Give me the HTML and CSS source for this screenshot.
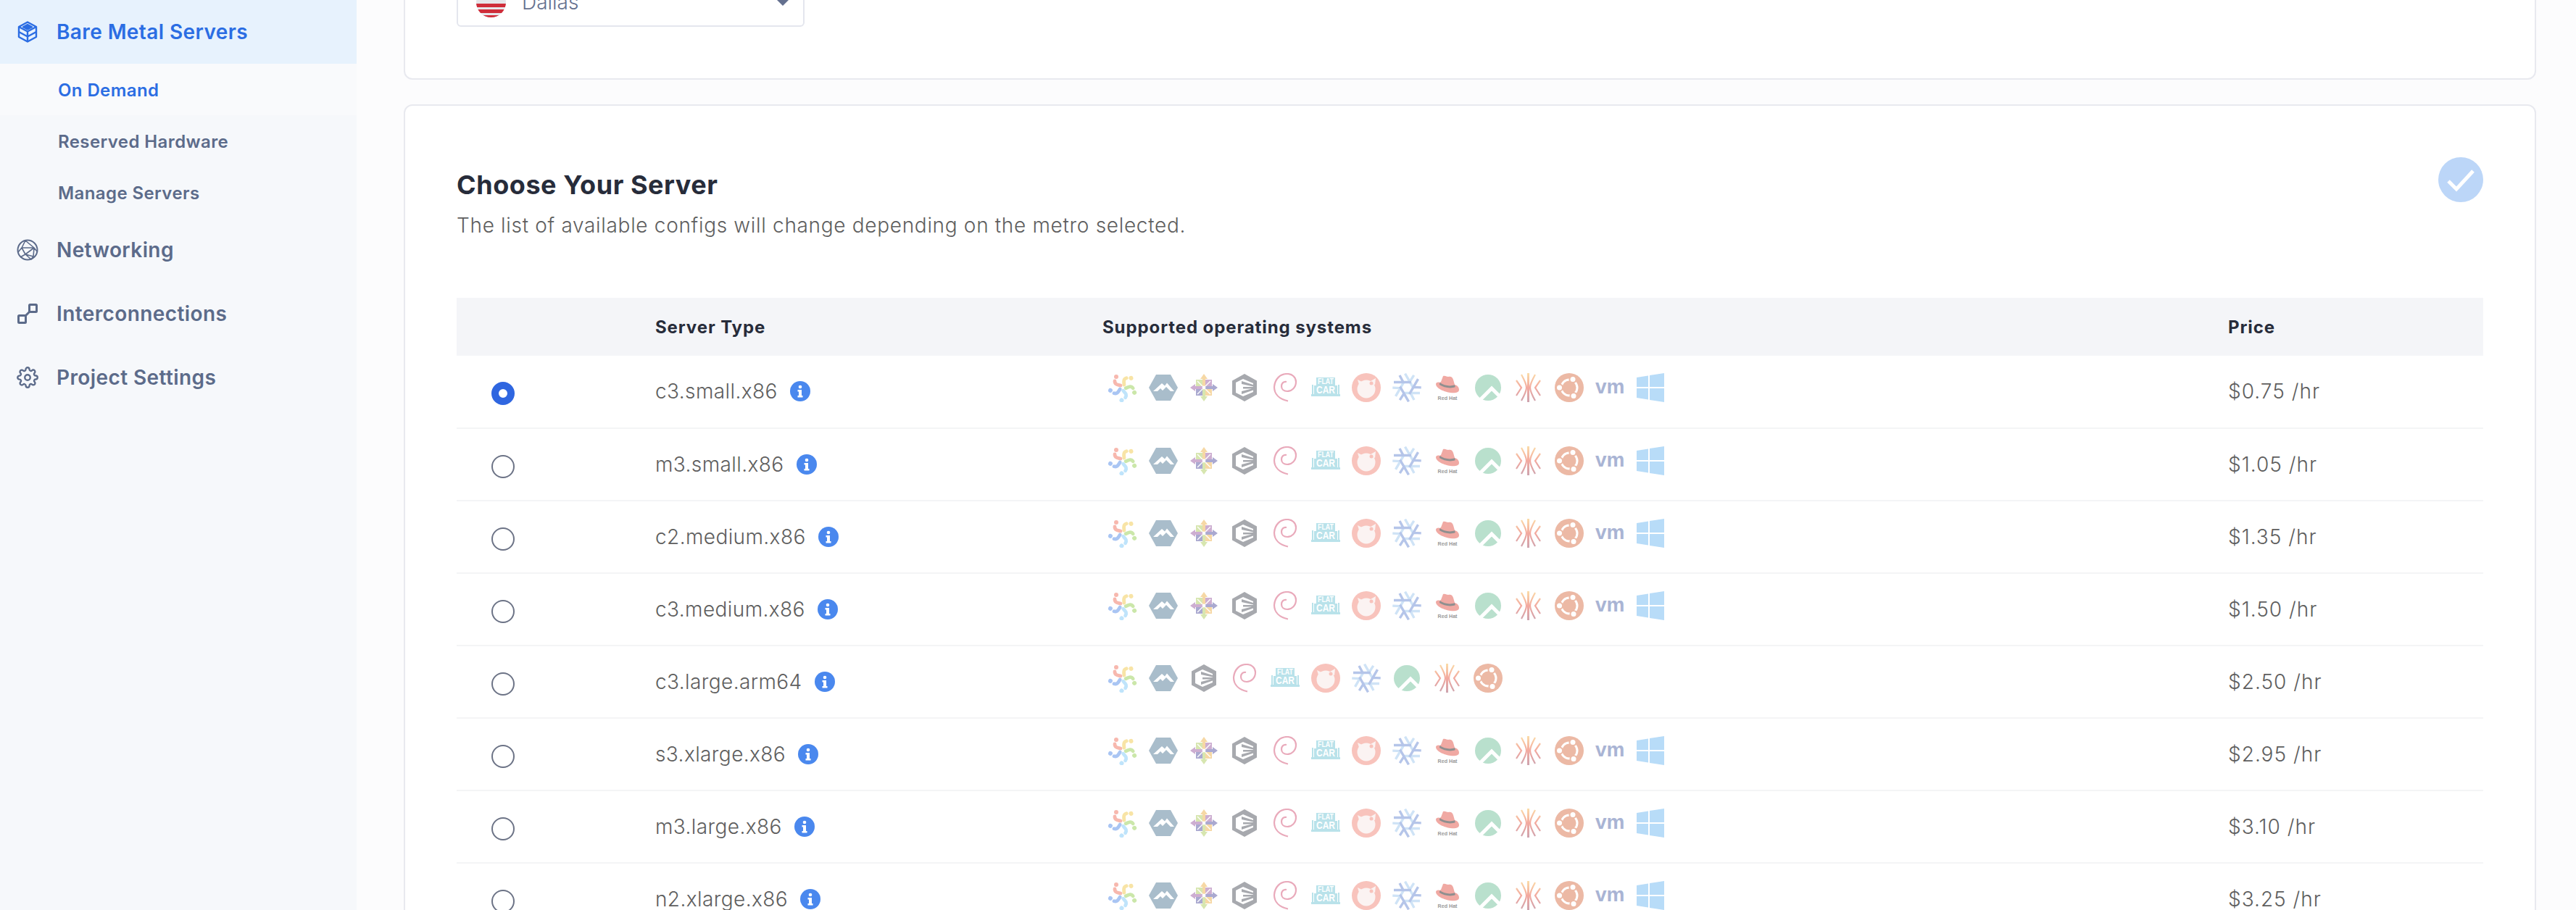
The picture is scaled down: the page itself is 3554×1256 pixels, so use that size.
FILE: index.html
```html
<!DOCTYPE html>
<html lang="en">

<head>
    <meta charset="UTF-8">
    <title>Choose Your Server</title>
    <link rel="stylesheet" href="styles.css">
</head>

<body>
    <!-- shared icons -->
    <svg class="defs" aria-hidden="true">
        <defs>
            <linearGradient id="streak" gradientUnits="userSpaceOnUse" x1="0" y1="0" x2="0" y2="40">
                <stop offset="0" stop-color="#fbdca8" />
                <stop offset=".5" stop-color="#f3a99f" />
                <stop offset="1" stop-color="#cda3ae" />
            </linearGradient>
            <g id="alma-petal" fill="none" stroke-width="4.800" stroke-linecap="round">
                <path d="M9 11c0 5 4 5 8 6" />
            </g>
        </defs>
        <symbol id="os-alma" viewBox="0 0 40 40">
            <g stroke="#f7b8ae" fill="#f7b8ae"><use href="#alma-petal" /><circle cx="11" cy="5" r="3" stroke="none" /></g>
            <g stroke="#f8e4a6" fill="#f8e4a6" transform="rotate(72 20 20)"><use href="#alma-petal" /><circle cx="11" cy="5" r="3" stroke="none" /></g>
            <g stroke="#cbe7aa" fill="#cbe7aa" transform="rotate(144 20 20)"><use href="#alma-petal" /><circle cx="11" cy="5" r="3" stroke="none" /></g>
            <g stroke="#bfe4fb" fill="#bfe4fb" transform="rotate(216 20 20)"><use href="#alma-petal" /><circle cx="11" cy="5" r="3" stroke="none" /></g>
            <g stroke="#a9c5f3" fill="#a9c5f3" transform="rotate(288 20 20)"><use href="#alma-petal" /><circle cx="11" cy="5" r="3" stroke="none" /></g>
        </symbol>
        <symbol id="os-alpine" viewBox="0 0 40 40">
            <path d="M0 20 10 2h20l10 18-10 18H10z" fill="#a9bdcb" />
            <path d="M6 25 18 14l4 3.500 3-4 10 11.500h-5l-6-6-5 5-3-3-4 4z" fill="#fff" />
        </symbol>
        <symbol id="os-centos" viewBox="0 0 40 40">
            <path d="M9 9h10v10H9z" fill="#d7e6b0" />
            <path d="M21 9h10v10H21z" fill="#cdaed1" />
            <path d="M9 21h10v10H9z" fill="#aaa9d0" />
            <path d="M21 21h10v10H21z" fill="#f6d8a5" />
            <path d="M20 1l5 7h-3v11h-4V8h-3z" fill="#f6d8a5" />
            <path d="M39 20l-7 5v-3H21v-4h11v-3z" fill="#aaa9d0" />
            <path d="M20 39l-5-7h3V21h4v11h3z" fill="#d7e6b0" />
            <path d="M1 20l7-5v3h11v4H8v3z" fill="#cdaed1" />
            <path d="M11 11l7 7m4 0 7-7m-18 18 7-7m4 0 7 7" stroke="#fff" stroke-width="1.400" />
            <circle cx="20" cy="20" r="2.400" fill="#fff" />
        </symbol>
        <symbol id="os-gray" viewBox="0 0 40 40">
            <path d="M20 1l17 9.500v19L20 39 3 29.500v-19z" fill="#a7a9ae" />
            <path d="M8 13l10-5 14 6v12l-14 6-10-5z" fill="#fff" />
            <path d="M16 11l16 5v2.500L16 15zM18 19h14v2.500H18zM16 25l16-4v2.500L16 29z" fill="#a7a9ae" />
        </symbol>
        <symbol id="os-debian" viewBox="0 0 40 40">
            <path d="M24 38.500C12 36 5 29 5 19 6 8 13 1 23 1c7 0 12 5 12 11 0 8-6 13-12 13-5 0-8-3-8-7s3-7 7-6" fill="none" stroke="#e9aabb" stroke-width="2.200" />
        </symbol>
        <symbol id="os-flatcar" viewBox="0 0 40 40">
            <path d="M7 6h26v11h3v12h1V16h2v13h1v3H0v-3h1V16h2v13h1V17h3z" fill="#b9e2ea" />
        </symbol>
        <symbol id="os-freebsd" viewBox="0 0 40 40">
            <circle cx="20" cy="20" r="20" fill="#f8c3bc" />
            <circle cx="20" cy="22" r="12.500" fill="#fbf3f2" />
            <path d="M8 9l8 4-5 6z" fill="#fbf3f2" />
            <path d="M26 11l7-4-1 9-3-1z" fill="#fbf3f2" />
            <circle cx="27" cy="14" r="2.500" fill="#f8c3bc" />
        </symbol>
        <symbol id="os-nix" viewBox="0 0 40 40">
            <g fill="none" stroke-width="3.400">
                <path d="M2 12.500H26M15 12.500L10 3" stroke="#cfe3f6" transform="rotate(60 20 20)" />
                <path d="M2 12.500H26M15 12.500L10 3" stroke="#cfe3f6" transform="rotate(180 20 20)" />
                <path d="M2 12.500H26M15 12.500L10 3" stroke="#cfe3f6" transform="rotate(300 20 20)" />
                <path d="M2 12.500H26M15 12.500L10 3" stroke="#b5c5e9" />
                <path d="M2 12.500H26M15 12.500L10 3" stroke="#b5c5e9" transform="rotate(120 20 20)" />
                <path d="M2 12.500H26M15 12.500L10 3" stroke="#b5c5e9" transform="rotate(240 20 20)" />
            </g>
        </symbol>
        <symbol id="os-redhat" viewBox="0 0 40 40">
            <path d="M14 4c3-1 5 1 7 1 3-1 6 0 7 4l2 7c4 1 6 4 6 7 0 4-6 5-12 4C16 26 4 21 4 15c0-2 3-3 5-2l2-1z" fill="#f0a9a3" />
            <path d="M9.500 13c5 4 15 6 20.500 3l.8 3c-6 3-16 1-22-3z" fill="#8f8f8f" />
        </symbol>
        <symbol id="os-rocky" viewBox="0 0 40 40">
            <circle cx="20" cy="20" r="18" fill="#b9e0cd" />
            <path d="M9 37l16-16 13 13" fill="none" stroke="#fff" stroke-width="5" />
        </symbol>
        <symbol id="os-streak" viewBox="0 0 40 40">
            <g fill="none" stroke="url(#streak)">
                <path d="M19.500 0v40" stroke-width="3" />
                <path d="M10 2c5 9 7 13 7 18s-2 9-7 18" stroke-width="2.200" />
                <path d="M29 2c-5 9-7 13-7 18s2 9 7 18" stroke-width="2.200" />
                <path d="M3 10l7 10-7 11" stroke-width="2.200" />
                <path d="M36 10l-7 10 7 11" stroke-width="2.200" />
            </g>
        </symbol>
        <symbol id="os-ubuntu" viewBox="0 0 40 40">
            <circle cx="20" cy="20" r="20" fill="#ecb9a5" />
            <circle cx="20" cy="20" r="11" fill="none" stroke="#fff" stroke-width="3" />
            <circle cx="25" cy="8.500" r="5.500" fill="#ecb9a5" />
            <circle cx="6.500" cy="20" r="5.500" fill="#ecb9a5" />
            <circle cx="26" cy="31.500" r="5.500" fill="#ecb9a5" />
            <circle cx="25" cy="8.500" r="3.500" fill="#fff" />
            <circle cx="6.500" cy="20" r="3.500" fill="#fff" />
            <circle cx="26" cy="31.500" r="3.500" fill="#fff" />
        </symbol>
        <symbol id="os-windows" viewBox="0 0 40 40">
            <path d="M1 6l16-2.500V19H1zM19 3l20-3v19H19zM1 21h16v15.500L1 34zM19 21h20v19l-20-3z" fill="#b8dcf8" />
        </symbol>
        <symbol id="info" viewBox="0 0 28 28">
            <circle cx="14" cy="14" r="14" fill="#4a88ee" />
            <circle cx="14" cy="8" r="2.300" fill="#fff" />
            <path d="M10.500 12h5.500v8h1.500v2.500h-7V20H12v-5.500h-1.500z" fill="#fff" />
        </symbol>
    </svg>

    <div class="page">
        <nav class="sidebar">
            <a class="nav-item active">
                <svg class="nav-icon" viewBox="0 0 30 30" fill="none" stroke="currentColor" stroke-width="2.400" stroke-linejoin="round">
                    <path d="M15 1.500 27 8v14l-12 6.500L3 22V8z" />
                    <path d="M3 8l12 6.500L27 8M15 14.500v14M3 15l12 6.500L27 15" />
                    <path d="M15 5l6 3.200-6 3.200-6-3.200z" fill="currentColor" />
                </svg>
                Bare Metal Servers
            </a>
            <a class="sub-item current">On Demand</a>
            <a class="sub-item">Reserved Hardware</a>
            <a class="sub-item">Manage Servers</a>
            <a class="nav-item">
                <svg class="nav-icon" viewBox="0 0 30 30" fill="none" stroke="currentColor" stroke-width="2" stroke-linejoin="round">
                    <circle cx="15" cy="15" r="13.500" />
                    <path d="M12 2 7 12l-5 6M12 2l12 10 4 5M7 12l17 0M7 12l5 9 12-9M12 21l-7 4M12 21l8 7M24 12l-1 12-3 4M12 21l11 3" stroke-width="1.600" />
                </svg>
                Networking
            </a>
            <a class="nav-item">
                <svg class="nav-icon" viewBox="0 0 30 30" fill="none" stroke="currentColor" stroke-width="3" stroke-linejoin="round">
                    <rect x="2.500" y="17.500" width="10" height="10" rx="1" />
                    <rect x="17.500" y="2.500" width="10" height="10" rx="1" />
                    <path d="M12.500 17.500l5-5" />
                </svg>
                Interconnections
            </a>
            <a class="nav-item">
                <svg class="nav-icon" viewBox="0 0 24 24" fill="none" stroke="currentColor" stroke-width="1.900" stroke-linejoin="round">
                    <circle cx="12" cy="12" r="3" />
                    <path d="M19.400 15a1.650 1.650 0 0 0 .33 1.820l.06.06a2 2 0 0 1 0 2.830 2 2 0 0 1-2.830 0l-.06-.06a1.650 1.650 0 0 0-1.820-.33 1.650 1.650 0 0 0-1 1.510V21a2 2 0 0 1-2 2 2 2 0 0 1-2-2v-.09A1.650 1.650 0 0 0 9 19.400a1.650 1.650 0 0 0-1.820.33l-.06.06a2 2 0 0 1-2.830 0 2 2 0 0 1 0-2.830l.06-.06a1.650 1.650 0 0 0 .33-1.820 1.650 1.650 0 0 0-1.510-1H3a2 2 0 0 1-2-2 2 2 0 0 1 2-2h.09A1.650 1.650 0 0 0 4.600 9a1.650 1.650 0 0 0-.33-1.820l-.06-.06a2 2 0 0 1 0-2.830 2 2 0 0 1 2.830 0l.06.06a1.650 1.650 0 0 0 1.820.33H9a1.650 1.650 0 0 0 1-1.510V3a2 2 0 0 1 2-2 2 2 0 0 1 2 2v.09a1.650 1.650 0 0 0 1 1.510 1.650 1.650 0 0 0 1.820-.33l.06-.06a2 2 0 0 1 2.830 0 2 2 0 0 1 0 2.830l-.06.06a1.650 1.650 0 0 0-.33 1.820V9a1.650 1.650 0 0 0 1.510 1H21a2 2 0 0 1 2 2 2 2 0 0 1-2 2h-.09a1.650 1.650 0 0 0-1.510 1z" />
                </svg>
                Project Settings
            </a>
        </nav>

        <main class="main">
            <section class="card metro-card">
                <div class="select">
                    <svg class="flag" viewBox="0 0 41 41">
                        <clipPath id="flag-clip"><circle cx="20.500" cy="20.500" r="20.500" /></clipPath>
                        <g clip-path="url(#flag-clip)">
                            <rect width="41" height="41" fill="#e6e6ea" />
                            <rect y="22" width="41" height="5" fill="#cf2d3a" />
                            <rect y="30" width="41" height="5" fill="#cf2d3a" />
                            <rect y="38" width="41" height="3" fill="#cf2d3a" />
                            <rect width="41" height="17" fill="#2f5cb8" />
                        </g>
                    </svg>
                    <span class="select-value">Dallas</span>
                    <span class="caret"></span>
                </div>
            </section>

            <section class="card server-card">
                <header class="card-head">
                    <div>
                        <h2 class="card-title">Choose Your Server</h2>
                        <p class="card-desc">The list of available configs will change depending on the metro selected.</p>
                    </div>
                    <svg class="done" viewBox="0 0 62 62">
                        <circle cx="31" cy="31" r="31" fill="#bcd6f8" />
                        <path d="M14 33l11 11 23-25" fill="none" stroke="#fff" stroke-width="5" />
                    </svg>
                </header>

                <table class="server-table">
                    <colgroup>
                        <col class="col-radio">
                        <col class="col-type">
                        <col class="col-os">
                        <col class="col-price">
                    </colgroup>
                    <thead>
                        <tr>
                            <th></th>
                            <th>Server Type</th>
                            <th>Supported operating systems</th>
                            <th>Price</th>
                        </tr>
                    </thead>
                    <tbody>
                        <tr>
                            <td class="cell-radio"><span class="radio checked"></span></td>
                            <td class="cell-type">c3.small.x86<svg class="info"><use href="#info" /></svg></td>
                            <td class="cell-os">
                                <svg class="os" viewBox="0 0 40 40"><use href="#os-alma" /></svg><svg class="os" viewBox="0 0 40 40"><use href="#os-alpine" /></svg><svg class="os" viewBox="0 0 40 40"><use href="#os-centos" /></svg><svg class="os" viewBox="0 0 40 40"><use href="#os-gray" /></svg><svg class="os" viewBox="0 0 40 40"><use href="#os-debian" /></svg><svg class="os" viewBox="0 0 40 40"><use href="#os-flatcar" /><text x="20" y="15" class="logo-text flatcar-top" textLength="22" lengthAdjust="spacingAndGlyphs">FLAT</text><text x="20" y="28" class="logo-text flatcar-bottom" textLength="26" lengthAdjust="spacingAndGlyphs">CAR</text></svg><svg class="os" viewBox="0 0 40 40"><use href="#os-freebsd" /></svg><svg class="os" viewBox="0 0 40 40"><use href="#os-nix" /></svg><svg class="os" viewBox="0 0 40 40"><use href="#os-redhat" /><text x="20" y="37" class="logo-text redhat-text" textLength="27" lengthAdjust="spacingAndGlyphs">Red Hat</text></svg><svg class="os" viewBox="0 0 40 40"><use href="#os-rocky" /></svg><svg class="os" viewBox="0 0 40 40"><use href="#os-streak" /></svg><svg class="os" viewBox="0 0 40 40"><use href="#os-ubuntu" /></svg><svg class="os" viewBox="0 0 40 40"><text x="0" y="28" class="logo-text vm-text">vm</text></svg><svg class="os" viewBox="0 0 40 40"><use href="#os-windows" /></svg>
                            </td>
                            <td class="cell-price">$0.75 /hr</td>
                        </tr>
                        <tr>
                            <td class="cell-radio"><span class="radio"></span></td>
                            <td class="cell-type">m3.small.x86<svg class="info"><use href="#info" /></svg></td>
                            <td class="cell-os">
                                <svg class="os" viewBox="0 0 40 40"><use href="#os-alma" /></svg><svg class="os" viewBox="0 0 40 40"><use href="#os-alpine" /></svg><svg class="os" viewBox="0 0 40 40"><use href="#os-centos" /></svg><svg class="os" viewBox="0 0 40 40"><use href="#os-gray" /></svg><svg class="os" viewBox="0 0 40 40"><use href="#os-debian" /></svg><svg class="os" viewBox="0 0 40 40"><use href="#os-flatcar" /><text x="20" y="15" class="logo-text flatcar-top" textLength="22" lengthAdjust="spacingAndGlyphs">FLAT</text><text x="20" y="28" class="logo-text flatcar-bottom" textLength="26" lengthAdjust="spacingAndGlyphs">CAR</text></svg><svg class="os" viewBox="0 0 40 40"><use href="#os-freebsd" /></svg><svg class="os" viewBox="0 0 40 40"><use href="#os-nix" /></svg><svg class="os" viewBox="0 0 40 40"><use href="#os-redhat" /><text x="20" y="37" class="logo-text redhat-text" textLength="27" lengthAdjust="spacingAndGlyphs">Red Hat</text></svg><svg class="os" viewBox="0 0 40 40"><use href="#os-rocky" /></svg><svg class="os" viewBox="0 0 40 40"><use href="#os-streak" /></svg><svg class="os" viewBox="0 0 40 40"><use href="#os-ubuntu" /></svg><svg class="os" viewBox="0 0 40 40"><text x="0" y="28" class="logo-text vm-text">vm</text></svg><svg class="os" viewBox="0 0 40 40"><use href="#os-windows" /></svg>
                            </td>
                            <td class="cell-price">$1.05 /hr</td>
                        </tr>
                        <tr>
                            <td class="cell-radio"><span class="radio"></span></td>
                            <td class="cell-type">c2.medium.x86<svg class="info"><use href="#info" /></svg></td>
                            <td class="cell-os">
                                <svg class="os" viewBox="0 0 40 40"><use href="#os-alma" /></svg><svg class="os" viewBox="0 0 40 40"><use href="#os-alpine" /></svg><svg class="os" viewBox="0 0 40 40"><use href="#os-centos" /></svg><svg class="os" viewBox="0 0 40 40"><use href="#os-gray" /></svg><svg class="os" viewBox="0 0 40 40"><use href="#os-debian" /></svg><svg class="os" viewBox="0 0 40 40"><use href="#os-flatcar" /><text x="20" y="15" class="logo-text flatcar-top" textLength="22" lengthAdjust="spacingAndGlyphs">FLAT</text><text x="20" y="28" class="logo-text flatcar-bottom" textLength="26" lengthAdjust="spacingAndGlyphs">CAR</text></svg><svg class="os" viewBox="0 0 40 40"><use href="#os-freebsd" /></svg><svg class="os" viewBox="0 0 40 40"><use href="#os-nix" /></svg><svg class="os" viewBox="0 0 40 40"><use href="#os-redhat" /><text x="20" y="37" class="logo-text redhat-text" textLength="27" lengthAdjust="spacingAndGlyphs">Red Hat</text></svg><svg class="os" viewBox="0 0 40 40"><use href="#os-rocky" /></svg><svg class="os" viewBox="0 0 40 40"><use href="#os-streak" /></svg><svg class="os" viewBox="0 0 40 40"><use href="#os-ubuntu" /></svg><svg class="os" viewBox="0 0 40 40"><text x="0" y="28" class="logo-text vm-text">vm</text></svg><svg class="os" viewBox="0 0 40 40"><use href="#os-windows" /></svg>
                            </td>
                            <td class="cell-price">$1.35 /hr</td>
                        </tr>
                        <tr>
                            <td class="cell-radio"><span class="radio"></span></td>
                            <td class="cell-type">c3.medium.x86<svg class="info"><use href="#info" /></svg></td>
                            <td class="cell-os">
                                <svg class="os" viewBox="0 0 40 40"><use href="#os-alma" /></svg><svg class="os" viewBox="0 0 40 40"><use href="#os-alpine" /></svg><svg class="os" viewBox="0 0 40 40"><use href="#os-centos" /></svg><svg class="os" viewBox="0 0 40 40"><use href="#os-gray" /></svg><svg class="os" viewBox="0 0 40 40"><use href="#os-debian" /></svg><svg class="os" viewBox="0 0 40 40"><use href="#os-flatcar" /><text x="20" y="15" class="logo-text flatcar-top" textLength="22" lengthAdjust="spacingAndGlyphs">FLAT</text><text x="20" y="28" class="logo-text flatcar-bottom" textLength="26" lengthAdjust="spacingAndGlyphs">CAR</text></svg><svg class="os" viewBox="0 0 40 40"><use href="#os-freebsd" /></svg><svg class="os" viewBox="0 0 40 40"><use href="#os-nix" /></svg><svg class="os" viewBox="0 0 40 40"><use href="#os-redhat" /><text x="20" y="37" class="logo-text redhat-text" textLength="27" lengthAdjust="spacingAndGlyphs">Red Hat</text></svg><svg class="os" viewBox="0 0 40 40"><use href="#os-rocky" /></svg><svg class="os" viewBox="0 0 40 40"><use href="#os-streak" /></svg><svg class="os" viewBox="0 0 40 40"><use href="#os-ubuntu" /></svg><svg class="os" viewBox="0 0 40 40"><text x="0" y="28" class="logo-text vm-text">vm</text></svg><svg class="os" viewBox="0 0 40 40"><use href="#os-windows" /></svg>
                            </td>
                            <td class="cell-price">$1.50 /hr</td>
                        </tr>
                        <tr>
                            <td class="cell-radio"><span class="radio"></span></td>
                            <td class="cell-type">c3.large.arm64<svg class="info"><use href="#info" /></svg></td>
                            <td class="cell-os">
                                <svg class="os" viewBox="0 0 40 40"><use href="#os-alma" /></svg><svg class="os" viewBox="0 0 40 40"><use href="#os-alpine" /></svg><svg class="os" viewBox="0 0 40 40"><use href="#os-gray" /></svg><svg class="os" viewBox="0 0 40 40"><use href="#os-debian" /></svg><svg class="os" viewBox="0 0 40 40"><use href="#os-flatcar" /><text x="20" y="15" class="logo-text flatcar-top" textLength="22" lengthAdjust="spacingAndGlyphs">FLAT</text><text x="20" y="28" class="logo-text flatcar-bottom" textLength="26" lengthAdjust="spacingAndGlyphs">CAR</text></svg><svg class="os" viewBox="0 0 40 40"><use href="#os-freebsd" /></svg><svg class="os" viewBox="0 0 40 40"><use href="#os-nix" /></svg><svg class="os" viewBox="0 0 40 40"><use href="#os-rocky" /></svg><svg class="os" viewBox="0 0 40 40"><use href="#os-streak" /></svg><svg class="os" viewBox="0 0 40 40"><use href="#os-ubuntu" /></svg>
                            </td>
                            <td class="cell-price">$2.50 /hr</td>
                        </tr>
                        <tr>
                            <td class="cell-radio"><span class="radio"></span></td>
                            <td class="cell-type">s3.xlarge.x86<svg class="info"><use href="#info" /></svg></td>
                            <td class="cell-os">
                                <svg class="os" viewBox="0 0 40 40"><use href="#os-alma" /></svg><svg class="os" viewBox="0 0 40 40"><use href="#os-alpine" /></svg><svg class="os" viewBox="0 0 40 40"><use href="#os-centos" /></svg><svg class="os" viewBox="0 0 40 40"><use href="#os-gray" /></svg><svg class="os" viewBox="0 0 40 40"><use href="#os-debian" /></svg><svg class="os" viewBox="0 0 40 40"><use href="#os-flatcar" /><text x="20" y="15" class="logo-text flatcar-top" textLength="22" lengthAdjust="spacingAndGlyphs">FLAT</text><text x="20" y="28" class="logo-text flatcar-bottom" textLength="26" lengthAdjust="spacingAndGlyphs">CAR</text></svg><svg class="os" viewBox="0 0 40 40"><use href="#os-freebsd" /></svg><svg class="os" viewBox="0 0 40 40"><use href="#os-nix" /></svg><svg class="os" viewBox="0 0 40 40"><use href="#os-redhat" /><text x="20" y="37" class="logo-text redhat-text" textLength="27" lengthAdjust="spacingAndGlyphs">Red Hat</text></svg><svg class="os" viewBox="0 0 40 40"><use href="#os-rocky" /></svg><svg class="os" viewBox="0 0 40 40"><use href="#os-streak" /></svg><svg class="os" viewBox="0 0 40 40"><use href="#os-ubuntu" /></svg><svg class="os" viewBox="0 0 40 40"><text x="0" y="28" class="logo-text vm-text">vm</text></svg><svg class="os" viewBox="0 0 40 40"><use href="#os-windows" /></svg>
                            </td>
                            <td class="cell-price">$2.95 /hr</td>
                        </tr>
                        <tr>
                            <td class="cell-radio"><span class="radio"></span></td>
                            <td class="cell-type">m3.large.x86<svg class="info"><use href="#info" /></svg></td>
                            <td class="cell-os">
                                <svg class="os" viewBox="0 0 40 40"><use href="#os-alma" /></svg><svg class="os" viewBox="0 0 40 40"><use href="#os-alpine" /></svg><svg class="os" viewBox="0 0 40 40"><use href="#os-centos" /></svg><svg class="os" viewBox="0 0 40 40"><use href="#os-gray" /></svg><svg class="os" viewBox="0 0 40 40"><use href="#os-debian" /></svg><svg class="os" viewBox="0 0 40 40"><use href="#os-flatcar" /><text x="20" y="15" class="logo-text flatcar-top" textLength="22" lengthAdjust="spacingAndGlyphs">FLAT</text><text x="20" y="28" class="logo-text flatcar-bottom" textLength="26" lengthAdjust="spacingAndGlyphs">CAR</text></svg><svg class="os" viewBox="0 0 40 40"><use href="#os-freebsd" /></svg><svg class="os" viewBox="0 0 40 40"><use href="#os-nix" /></svg><svg class="os" viewBox="0 0 40 40"><use href="#os-redhat" /><text x="20" y="37" class="logo-text redhat-text" textLength="27" lengthAdjust="spacingAndGlyphs">Red Hat</text></svg><svg class="os" viewBox="0 0 40 40"><use href="#os-rocky" /></svg><svg class="os" viewBox="0 0 40 40"><use href="#os-streak" /></svg><svg class="os" viewBox="0 0 40 40"><use href="#os-ubuntu" /></svg><svg class="os" viewBox="0 0 40 40"><text x="0" y="28" class="logo-text vm-text">vm</text></svg><svg class="os" viewBox="0 0 40 40"><use href="#os-windows" /></svg>
                            </td>
                            <td class="cell-price">$3.10 /hr</td>
                        </tr>
                        <tr>
                            <td class="cell-radio"><span class="radio"></span></td>
                            <td class="cell-type">n2.xlarge.x86<svg class="info"><use href="#info" /></svg></td>
                            <td class="cell-os">
                                <svg class="os" viewBox="0 0 40 40"><use href="#os-alma" /></svg><svg class="os" viewBox="0 0 40 40"><use href="#os-alpine" /></svg><svg class="os" viewBox="0 0 40 40"><use href="#os-centos" /></svg><svg class="os" viewBox="0 0 40 40"><use href="#os-gray" /></svg><svg class="os" viewBox="0 0 40 40"><use href="#os-debian" /></svg><svg class="os" viewBox="0 0 40 40"><use href="#os-flatcar" /><text x="20" y="15" class="logo-text flatcar-top" textLength="22" lengthAdjust="spacingAndGlyphs">FLAT</text><text x="20" y="28" class="logo-text flatcar-bottom" textLength="26" lengthAdjust="spacingAndGlyphs">CAR</text></svg><svg class="os" viewBox="0 0 40 40"><use href="#os-freebsd" /></svg><svg class="os" viewBox="0 0 40 40"><use href="#os-nix" /></svg><svg class="os" viewBox="0 0 40 40"><use href="#os-redhat" /><text x="20" y="37" class="logo-text redhat-text" textLength="27" lengthAdjust="spacingAndGlyphs">Red Hat</text></svg><svg class="os" viewBox="0 0 40 40"><use href="#os-rocky" /></svg><svg class="os" viewBox="0 0 40 40"><use href="#os-streak" /></svg><svg class="os" viewBox="0 0 40 40"><use href="#os-ubuntu" /></svg><svg class="os" viewBox="0 0 40 40"><text x="0" y="28" class="logo-text vm-text">vm</text></svg><svg class="os" viewBox="0 0 40 40"><use href="#os-windows" /></svg>
                            </td>
                            <td class="cell-price">$3.25 /hr</td>
                        </tr>
                    </tbody>
                </table>
            </section>
        </main>
    </div>
</body>

</html>
```

FILE: styles.css
```css
* {
    margin: 0;
    padding: 0;
    box-sizing: border-box;
}

html,
body {
    height: 100%;
    overflow: hidden;
}

body {
    font-family: "Inter", "Liberation Sans", sans-serif;
    background: #fcfcfd;
    color: #5e5e5e;
}

.defs {
    position: absolute;
    width: 0;
    height: 0;
}

.page {
    display: flex;
    height: 1256px;
    overflow: hidden;
}

/* sidebar */

.sidebar {
    flex: 0 0 492px;
    background: #f6f8fb;
    color: #5c6b8a;
}

.nav-item {
    display: flex;
    align-items: center;
    height: 88px;
    padding-left: 23px;
    font-size: 28px;
    font-weight: 600;
    letter-spacing: .4px;
}

.nav-item.active {
    background: #e7f2fd;
    color: #2b6de3;
}

.nav-icon {
    flex: none;
    width: 30px;
    height: 30px;
    margin-right: 25px;
}

.sub-item {
    display: flex;
    align-items: center;
    height: 71px;
    padding: 2px 0 0 80px;
    font-size: 24px;
    font-weight: 600;
    letter-spacing: .4px;
}

.sub-item.current {
    background: #f9fafc;
    color: #2b6de3;
}

/* cards */

.main {
    flex: 1;
    padding: 0 55px 0 65px;
}

.card {
    background: #fff;
    border: 2px solid #e8e9ef;
    border-radius: 12px;
}

.metro-card {
    margin-top: -100px;
    padding: 67px 72px 71px 71px;
}

.select {
    display: flex;
    align-items: center;
    width: 480px;
    height: 68px;
    padding: 0 18px 0 25px;
    background: #fff;
    border: 2px solid #e4e6ee;
    border-radius: 6px;
    color: #64708f;
    font-size: 28px;
    font-weight: 300;
}

.flag {
    flex: none;
    width: 41px;
    height: 41px;
    margin-right: 22px;
}

.select-value {
    flex: 1;
}

.caret {
    width: 0;
    height: 0;
    border-left: 10px solid transparent;
    border-right: 10px solid transparent;
    border-top: 10px solid #64708f;
}

.server-card {
    margin-top: 34px;
    padding: 71px 71px 0;
}

.card-head {
    display: flex;
    justify-content: space-between;
    align-items: flex-start;
    margin-bottom: 80px;
}

.card-title {
    padding-top: 16px;
    color: #272c3a;
    font-size: 36px;
    line-height: 44px;
    font-weight: 700;
    letter-spacing: .55px;
}

.card-desc {
    margin-top: 14px;
    font-size: 28px;
    line-height: 40px;
    font-weight: 300;
    letter-spacing: .68px;
}

.done {
    flex: none;
    width: 62px;
    height: 62px;
}

/* table */

.server-table {
    width: 100%;
    table-layout: fixed;
    border-collapse: collapse;
}

.col-radio {
    width: 274px;
}

.col-type {
    width: 617px;
}

.col-price {
    width: 352px;
}

.server-table th {
    height: 80px;
    background: #f4f5f8;
    color: #272c3a;
    font-size: 24px;
    font-weight: 700;
    letter-spacing: .9px;
    text-align: left;
}

.server-table td {
    height: 100px;
    border-bottom: 2px solid #f4f5f6;
    vertical-align: top;
    font-size: 28px;
    font-weight: 300;
}

.cell-radio {
    padding: 36px 0 0 48px;
}

.radio {
    display: block;
    width: 32px;
    height: 32px;
    border: 2px solid #6c7386;
    border-radius: 50%;
}

.radio.checked {
    border: 10px solid #2f66e0;
}

.cell-type,
.cell-price {
    padding-top: 31px;
    line-height: 36px;
}

.cell-type {
    letter-spacing: .4px;
}

.cell-price {
    letter-spacing: 1px;
}

.info {
    width: 28px;
    height: 28px;
    margin-left: 17px;
    vertical-align: -4px;
}

.cell-os {
    padding: 24px 0 0 8px;
    font-size: 0;
}

.os {
    width: 40px;
    height: 40px;
    margin-right: 16px;
    overflow: visible;
}

/* text inside the small logos */

.logo-text {
    font-family: "Liberation Sans", sans-serif;
    font-weight: 700;
    fill: #fff;
    text-anchor: middle;
}

.flatcar-top {
    font-size: 10px;
}

.flatcar-bottom {
    font-size: 14px;
}

.redhat-text {
    fill: #9a9a9a;
    font-size: 7.500px;
}

.vm-text {
    fill: #a9b4d4;
    font-size: 28px;
    text-anchor: start;
}
```
